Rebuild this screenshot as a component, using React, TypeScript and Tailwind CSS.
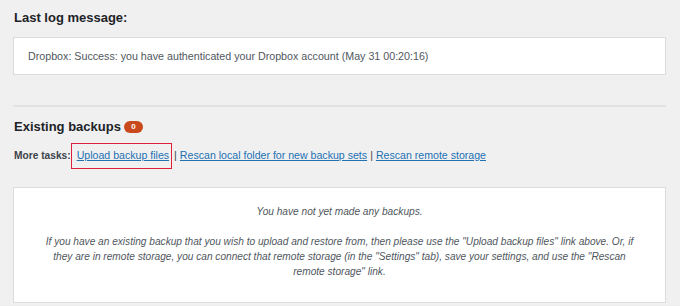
export default function App() {
  return (
    <div
      className="w-[680px] h-[306px] overflow-hidden bg-[#f0f0f1] pl-[13px] pr-[14px] text-[#3c434a]"
      style={{ fontFamily: '"Liberation Sans", Arial, sans-serif' }}
    >
      <h3 className="pt-[10px] pl-[1px] text-[13px] leading-[16px] font-bold text-[#1d2327]">Last log message:</h3>
      <div className="mt-[11px] h-[38px] bg-white border border-[#dcdcde] flex items-center pl-[14px] text-[10.7px] text-[#50575e]">
        Dropbox: Success: you have authenticated your Dropbox account (May 31 00:20:16)
      </div>
      <div className="mt-[30px] h-[2px] bg-[#e2e2e4]" />
      <h3 className="mt-[12px] pl-[1px] flex items-center gap-[3px] text-[13px] leading-[16px] font-bold text-[#1d2327]">
        Existing backups
        <span className="inline-flex items-center justify-center w-[19px] h-[12px] rounded-full bg-[#c9481c] text-white text-[8px] font-bold leading-none">
          0
        </span>
      </h3>
      <div className="mt-[8px] pl-[1px] flex items-center text-[10.6px] h-[26px]">
        <span className="font-bold text-[#3c434a] text-[10.2px]">More tasks:</span>
        <span className="h-[26px] border border-[#e0203a] flex items-center pl-[5px] pr-[2px]">
          <a className="text-[#2271b1] underline">Upload backup files</a>
        </span>
        <span className="ml-[2px] mr-[3px] text-[#3c434a]">|</span>
        <a className="text-[#2271b1] underline">Rescan local folder for new backup sets</a>
        <span className="mx-[3px] text-[#3c434a]">|</span>
        <a className="text-[#2271b1] underline">Rescan remote storage</a>
      </div>
      <div className="mt-[18px] h-[116px] bg-white border border-[#dcdcde] text-center italic text-[10.15px] leading-[15px] text-[#50575e]">
        <p className="pt-[16px]">You have not yet made any backups.</p>
        <p className="mt-[15px]">
          If you have an existing backup that you wish to upload and restore from, then please use the "Upload backup files" link above. Or, if
          <br />
          they are in remote storage, you can connect that remote storage (in the "Settings" tab), save your settings, and use the "Rescan
          <br />
          remote storage" link.
        </p>
      </div>
    </div>
  );
}
